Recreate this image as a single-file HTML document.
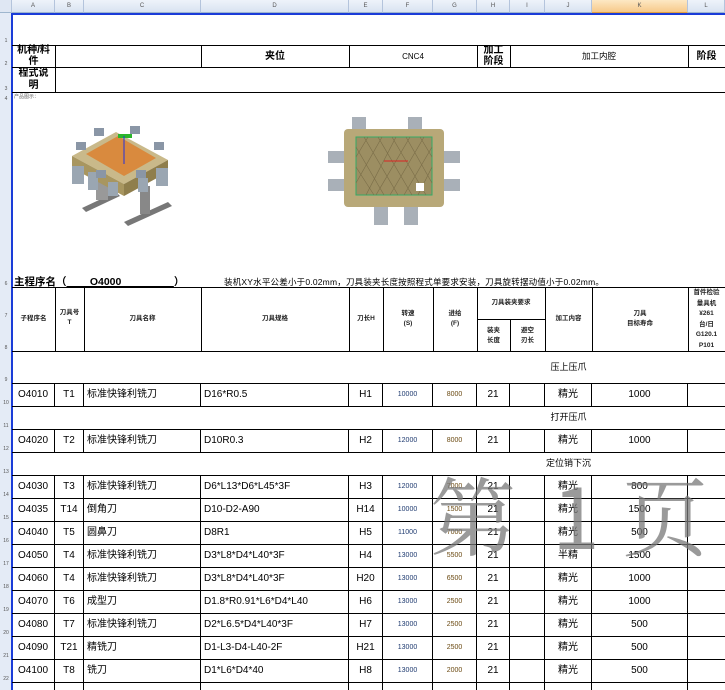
<!DOCTYPE html>
<html><head><meta charset="utf-8"><style>
*{margin:0;padding:0;box-sizing:border-box}
html,body{width:725px;height:690px;overflow:hidden}
body{background:#fff;position:relative;font-family:"Liberation Sans","Noto Sans CJK SC",sans-serif;color:#000}
.a{position:absolute}
.hl{position:absolute;height:1px;background:#000}
.vl{position:absolute;width:1px;background:#000}
.colh{position:absolute;top:0;height:13px;background:linear-gradient(#eef3fa,#d9e3f1);border-right:1px solid #b4c4dc;border-bottom:1px solid #9eb6ce;font-size:6px;color:#555;text-align:center;line-height:13px}
.rn{position:absolute;left:0;width:12px;font-size:5px;color:#555;text-align:center}
.row{position:absolute;left:12px;height:23px;display:flex}
.row div{height:22px;line-height:22px;border-right:1px solid #000;font-size:10px;text-align:center;white-space:nowrap;overflow:hidden}
.row .l{text-align:left;padding-left:3px}
.row .f{font-size:7px;color:#1f3b70}
.row .g{font-size:7px;color:#6b4a12}
.w1{width:43px}.w2{width:29px}.w3{width:117px}.w4{width:148px}.w5{width:34px}.w6{width:50px}.w7{width:44px}.w8{width:33px}.w9{width:35px}.w10{width:47px}.w11{width:96px}.w12{width:37px;border-right:none!important}
.b{font-weight:bold}
.hd{position:absolute;font-size:6.5px;font-weight:bold;text-align:center;line-height:10px;color:#222}
</style></head><body>
<div class="colh" style="left:0;width:12px;background:#dfe7f3"></div>
<div class="colh" style="left:12px;width:43px">A</div>
<div class="colh" style="left:55px;width:29px">B</div>
<div class="colh" style="left:84px;width:117px">C</div>
<div class="colh" style="left:201px;width:148px">D</div>
<div class="colh" style="left:349px;width:34px">E</div>
<div class="colh" style="left:383px;width:50px">F</div>
<div class="colh" style="left:433px;width:44px">G</div>
<div class="colh" style="left:477px;width:33px">H</div>
<div class="colh" style="left:510px;width:35px">I</div>
<div class="colh" style="left:545px;width:47px">J</div>
<div class="colh" style="left:592px;width:96px;background:linear-gradient(#fde8c4,#f7c98a);border-bottom:1px solid #e0a040">K</div>
<div class="colh" style="left:688px;width:37px">L</div>
<div class="a" style="left:0;top:13px;width:12px;height:677px;background:#e4ebf6;border-right:1px solid #b4c4dc"></div>
<div class="a" style="left:11px;top:13px;width:2px;height:677px;background:#1a3cd8"></div>
<div class="a" style="left:12px;top:13px;width:713px;height:2px;background:#1a3cd8"></div>
<div class="rn" style="top:38px">1</div><div class="rn" style="top:61px">2</div><div class="rn" style="top:86px">3</div><div class="rn" style="top:96px">4</div>
<div class="rn" style="top:281px">6</div><div class="rn" style="top:313px">7</div><div class="rn" style="top:345px">8</div><div class="rn" style="top:377px">9</div>
<div class="rn" style="top:400px">10</div><div class="rn" style="top:423px">11</div><div class="rn" style="top:446px">12</div><div class="rn" style="top:469px">13</div><div class="rn" style="top:492px">14</div><div class="rn" style="top:515px">15</div><div class="rn" style="top:538px">16</div><div class="rn" style="top:561px">17</div><div class="rn" style="top:584px">18</div><div class="rn" style="top:607px">19</div><div class="rn" style="top:630px">20</div><div class="rn" style="top:653px">21</div><div class="rn" style="top:676px">22</div>

<div class="hl" style="left:12px;width:713px;top:45px"></div>
<div class="hl" style="left:12px;width:713px;top:67px"></div>
<div class="hl" style="left:12px;width:713px;top:92px"></div>
<div class="vl" style="left:55px;top:45px;height:47px"></div>
<div class="vl" style="left:201px;top:45px;height:22px"></div>
<div class="vl" style="left:349px;top:45px;height:22px"></div>
<div class="vl" style="left:477px;top:45px;height:22px"></div>
<div class="vl" style="left:510px;top:45px;height:22px"></div>
<div class="vl" style="left:688px;top:45px;height:22px"></div>
<div class="a b" style="left:12px;top:45px;width:43px;font-size:10px;line-height:11px;text-align:center">机种/料<br>件</div>
<div class="a b" style="left:201px;top:46px;width:148px;font-size:10px;line-height:21px;text-align:center">夹位</div>
<div class="a" style="left:349px;top:46px;width:128px;font-size:8px;line-height:21px;text-align:center">CNC4</div>
<div class="a b" style="left:477px;top:45px;width:33px;height:22px;overflow:hidden;font-size:10px;line-height:11px;text-align:center">加工<br>阶段</div>
<div class="a" style="left:510px;top:46px;width:178px;font-size:8.5px;line-height:21px;text-align:center">加工内腔</div>
<div class="a b" style="left:688px;top:46px;width:37px;font-size:10px;line-height:21px;text-align:center">阶段</div>
<div class="a b" style="left:12px;top:68px;width:43px;font-size:10px;line-height:12px;text-align:center">程式说<br>明</div>
<div class="a" style="left:14px;top:93px;font-size:5px;color:#666">产品图示：</div>

<svg class="a" style="left:68px;top:116px" width="112" height="120" viewBox="0 0 112 120">
<polygon points="14,92 48,76 52,80 18,96" fill="#777"/>
<polygon points="56,106 100,86 104,90 60,110" fill="#777"/>
<rect x="72" y="70" width="10" height="28" fill="#888"/>
<rect x="28" y="58" width="12" height="26" fill="#999"/>
<polygon points="4,40 48,16 100,44 56,68" fill="#c9b98a"/>
<polygon points="4,40 56,68 56,80 4,52" fill="#a89660"/>
<polygon points="56,68 100,44 100,56 56,80" fill="#8f7e4c"/>
<polygon points="18,38 50,20 88,42 56,60" fill="#d98a3e"/>
<rect x="50" y="18" width="14" height="4" fill="#2bb52b"/>
<line x1="56" y1="20" x2="56" y2="48" stroke="#2233dd" stroke-width="1"/>
<g fill="#9aa6b2"><rect x="4" y="50" width="12" height="18"/><rect x="20" y="56" width="10" height="18"/><rect x="88" y="52" width="12" height="18"/><rect x="70" y="62" width="10" height="14"/><rect x="40" y="66" width="10" height="14"/></g>
<g fill="#8a96a6"><rect x="8" y="26" width="10" height="8"/><rect x="26" y="12" width="10" height="8"/><rect x="62" y="10" width="10" height="8"/><rect x="86" y="26" width="10" height="8"/><rect x="28" y="54" width="10" height="8"/><rect x="68" y="54" width="10" height="8"/></g>
</svg>
<svg class="a" style="left:328px;top:117px" width="132" height="110" viewBox="0 0 132 110">
<g fill="#a9b0b8"><rect x="24" y="0" width="14" height="22"/><rect x="80" y="0" width="14" height="22"/><rect x="0" y="34" width="22" height="12"/><rect x="0" y="62" width="22" height="12"/><rect x="110" y="34" width="22" height="12"/><rect x="110" y="62" width="22" height="12"/><rect x="46" y="86" width="14" height="22"/><rect x="76" y="86" width="14" height="22"/></g>
<rect x="16" y="12" width="100" height="78" rx="4" fill="#b8a878"/>
<rect x="28" y="20" width="76" height="58" fill="#9c8e62" stroke="#3a6" stroke-width="1"/>
<g stroke="#7a6d48" stroke-width="0.6"><path d="M28 30L56 78M28 50L46 78M36 20L70 78M50 20L84 78M64 20L98 78M78 20L104 66M92 20L104 40M104 30L76 78M104 50L90 78M96 20L62 78M82 20L48 78M68 20L38 78M54 20L28 66M40 20L28 40"/></g>
<line x1="56" y1="44" x2="80" y2="44" stroke="#d22" stroke-width="1"/>
<rect x="88" y="66" width="8" height="8" fill="#fff"/>
</svg>

<div class="a b" style="left:14px;top:274px;font-size:10.5px;white-space:nowrap">主程序名（<span style="text-decoration:underline">&nbsp;&nbsp;&nbsp;&nbsp;&nbsp;&nbsp;&nbsp;&nbsp;O4000&nbsp;&nbsp;&nbsp;&nbsp;&nbsp;&nbsp;&nbsp;&nbsp;&nbsp;&nbsp;&nbsp;&nbsp;&nbsp;&nbsp;&nbsp;&nbsp;&nbsp;&nbsp;</span>）</div>
<div class="a" style="left:224px;top:276px;font-size:8.5px;white-space:nowrap;letter-spacing:0.2px">装机XY水平公差小于0.02mm，刀具装夹长度按照程式单要求安装，刀具旋转摆动值小于0.02mm。</div>
<div class="hl" style="left:12px;width:713px;top:287px"></div>

<div class="hl" style="left:12px;width:713px;top:351px"></div>
<div class="hl" style="left:477px;width:68px;top:319px"></div>
<div class="vl" style="left:55px;top:287px;height:64px"></div>
<div class="vl" style="left:84px;top:287px;height:64px"></div>
<div class="vl" style="left:201px;top:287px;height:64px"></div>
<div class="vl" style="left:349px;top:287px;height:64px"></div>
<div class="vl" style="left:383px;top:287px;height:64px"></div>
<div class="vl" style="left:433px;top:287px;height:64px"></div>
<div class="vl" style="left:477px;top:287px;height:64px"></div>
<div class="vl" style="left:510px;top:319px;height:32px"></div>
<div class="vl" style="left:545px;top:287px;height:64px"></div>
<div class="vl" style="left:592px;top:287px;height:64px"></div>
<div class="vl" style="left:688px;top:287px;height:64px"></div>
<div class="hd" style="left:12px;top:314px;width:43px">子程序名</div>
<div class="hd" style="left:55px;top:308px;width:29px">刀具号<br>T</div>
<div class="hd" style="left:84px;top:314px;width:117px">刀具名称</div>
<div class="hd" style="left:201px;top:314px;width:148px">刀具规格</div>
<div class="hd" style="left:349px;top:314px;width:34px">刀长H</div>
<div class="hd" style="left:383px;top:309px;width:50px">转速<br>(S)</div>
<div class="hd" style="left:433px;top:309px;width:44px">进给<br>(F)</div>
<div class="hd" style="left:477px;top:298px;width:68px">刀具装夹要求</div>
<div class="hd" style="left:477px;top:326px;width:33px">装夹<br>长度</div>
<div class="hd" style="left:510px;top:326px;width:35px">避空<br>刃长</div>
<div class="hd" style="left:545px;top:314px;width:47px">加工内容</div>
<div class="hd" style="left:592px;top:309px;width:96px">刀具<br>目标寿命</div>
<div class="hd" style="left:688px;top:288px;width:37px;line-height:10.5px">首件检验<br>量具机<br>¥261<br>台/日<br>G120.1<br>P101</div>

<div class="a" style="left:545px;top:360px;width:47px;text-align:center;font-size:9px;white-space:nowrap">压上压爪</div>
<div class="a" style="left:545px;top:410px;width:47px;text-align:center;font-size:9px;white-space:nowrap">打开压爪</div>
<div class="a" style="left:520px;top:456px;width:97px;text-align:center;font-size:9px;white-space:nowrap">定位销下沉</div>
<div class="hl" style="left:12px;width:713px;top:383px"></div>
<div class="hl" style="left:12px;width:713px;top:406px"></div>
<div class="hl" style="left:12px;width:713px;top:429px"></div>
<div class="hl" style="left:12px;width:713px;top:452px"></div>
<div class="hl" style="left:12px;width:713px;top:475px"></div>
<div class="hl" style="left:12px;width:713px;top:498px"></div>
<div class="hl" style="left:12px;width:713px;top:521px"></div>
<div class="hl" style="left:12px;width:713px;top:544px"></div>
<div class="hl" style="left:12px;width:713px;top:567px"></div>
<div class="hl" style="left:12px;width:713px;top:590px"></div>
<div class="hl" style="left:12px;width:713px;top:613px"></div>
<div class="hl" style="left:12px;width:713px;top:636px"></div>
<div class="hl" style="left:12px;width:713px;top:659px"></div>
<div class="hl" style="left:12px;width:713px;top:682px"></div>

<div class="row" style="top:384px"><div class="w1">O4010</div><div class="w2">T1</div><div class="w3 l">标准快锋利铣刀</div><div class="w4 l">D16*R0.5</div><div class="w5">H1</div><div class="w6 f">10000</div><div class="w7 g">8000</div><div class="w8">21</div><div class="w9"></div><div class="w10">精光</div><div class="w11">1000</div><div class="w12"></div></div>
<div class="row" style="top:430px"><div class="w1">O4020</div><div class="w2">T2</div><div class="w3 l">标准快锋利铣刀</div><div class="w4 l">D10R0.3</div><div class="w5">H2</div><div class="w6 f">12000</div><div class="w7 g">8000</div><div class="w8">21</div><div class="w9"></div><div class="w10">精光</div><div class="w11">1000</div><div class="w12"></div></div>
<div class="row" style="top:476px"><div class="w1">O4030</div><div class="w2">T3</div><div class="w3 l">标准快锋利铣刀</div><div class="w4 l">D6*L13*D6*L45*3F</div><div class="w5">H3</div><div class="w6 f">12000</div><div class="w7 g">7000</div><div class="w8">21</div><div class="w9"></div><div class="w10">精光</div><div class="w11">800</div><div class="w12"></div></div>
<div class="row" style="top:499px"><div class="w1">O4035</div><div class="w2">T14</div><div class="w3 l">倒角刀</div><div class="w4 l">D10-D2-A90</div><div class="w5">H14</div><div class="w6 f">10000</div><div class="w7 g">1500</div><div class="w8">21</div><div class="w9"></div><div class="w10">精光</div><div class="w11">1500</div><div class="w12"></div></div>
<div class="row" style="top:522px"><div class="w1">O4040</div><div class="w2">T5</div><div class="w3 l">圆鼻刀</div><div class="w4 l">D8R1</div><div class="w5">H5</div><div class="w6 f">11000</div><div class="w7 g">7000</div><div class="w8">21</div><div class="w9"></div><div class="w10">精光</div><div class="w11">500</div><div class="w12"></div></div>
<div class="row" style="top:545px"><div class="w1">O4050</div><div class="w2">T4</div><div class="w3 l">标准快锋利铣刀</div><div class="w4 l">D3*L8*D4*L40*3F</div><div class="w5">H4</div><div class="w6 f">13000</div><div class="w7 g">5500</div><div class="w8">21</div><div class="w9"></div><div class="w10">半精</div><div class="w11">1500</div><div class="w12"></div></div>
<div class="row" style="top:568px"><div class="w1">O4060</div><div class="w2">T4</div><div class="w3 l">标准快锋利铣刀</div><div class="w4 l">D3*L8*D4*L40*3F</div><div class="w5">H20</div><div class="w6 f">13000</div><div class="w7 g">6500</div><div class="w8">21</div><div class="w9"></div><div class="w10">精光</div><div class="w11">1000</div><div class="w12"></div></div>
<div class="row" style="top:591px"><div class="w1">O4070</div><div class="w2">T6</div><div class="w3 l">成型刀</div><div class="w4 l">D1.8*R0.91*L6*D4*L40</div><div class="w5">H6</div><div class="w6 f">13000</div><div class="w7 g">2500</div><div class="w8">21</div><div class="w9"></div><div class="w10">精光</div><div class="w11">1000</div><div class="w12"></div></div>
<div class="row" style="top:614px"><div class="w1">O4080</div><div class="w2">T7</div><div class="w3 l">标准快锋利铣刀</div><div class="w4 l">D2*L6.5*D4*L40*3F</div><div class="w5">H7</div><div class="w6 f">13000</div><div class="w7 g">2500</div><div class="w8">21</div><div class="w9"></div><div class="w10">精光</div><div class="w11">500</div><div class="w12"></div></div>
<div class="row" style="top:637px"><div class="w1">O4090</div><div class="w2">T21</div><div class="w3 l">精铣刀</div><div class="w4 l">D1-L3-D4-L40-2F</div><div class="w5">H21</div><div class="w6 f">13000</div><div class="w7 g">2500</div><div class="w8">21</div><div class="w9"></div><div class="w10">精光</div><div class="w11">500</div><div class="w12"></div></div>
<div class="row" style="top:660px"><div class="w1">O4100</div><div class="w2">T8</div><div class="w3 l">铣刀</div><div class="w4 l">D1*L6*D4*40</div><div class="w5">H8</div><div class="w6 f">13000</div><div class="w7 g">2000</div><div class="w8">21</div><div class="w9"></div><div class="w10">精光</div><div class="w11">500</div><div class="w12"></div></div>
<div class="row" style="top:683px"><div class="w1"></div><div class="w2"></div><div class="w3"></div><div class="w4"></div><div class="w5"></div><div class="w6"></div><div class="w7"></div><div class="w8"></div><div class="w9"></div><div class="w10"></div><div class="w11"></div><div class="w12"></div></div>

<div class="a" style="left:430px;top:462px;font-size:86px;line-height:100px;color:rgba(120,120,120,0.75);font-family:'Noto Serif CJK SC',serif;white-space:nowrap">第</div>
<div class="a" style="left:552px;top:462px;font-size:86px;line-height:100px;color:rgba(120,120,120,0.75);font-family:'Noto Sans CJK SC',sans-serif">1</div>
<div class="a" style="left:622px;top:462px;font-size:86px;line-height:100px;color:rgba(120,120,120,0.75);font-family:'Noto Serif CJK SC',serif">页</div>
</body></html>
